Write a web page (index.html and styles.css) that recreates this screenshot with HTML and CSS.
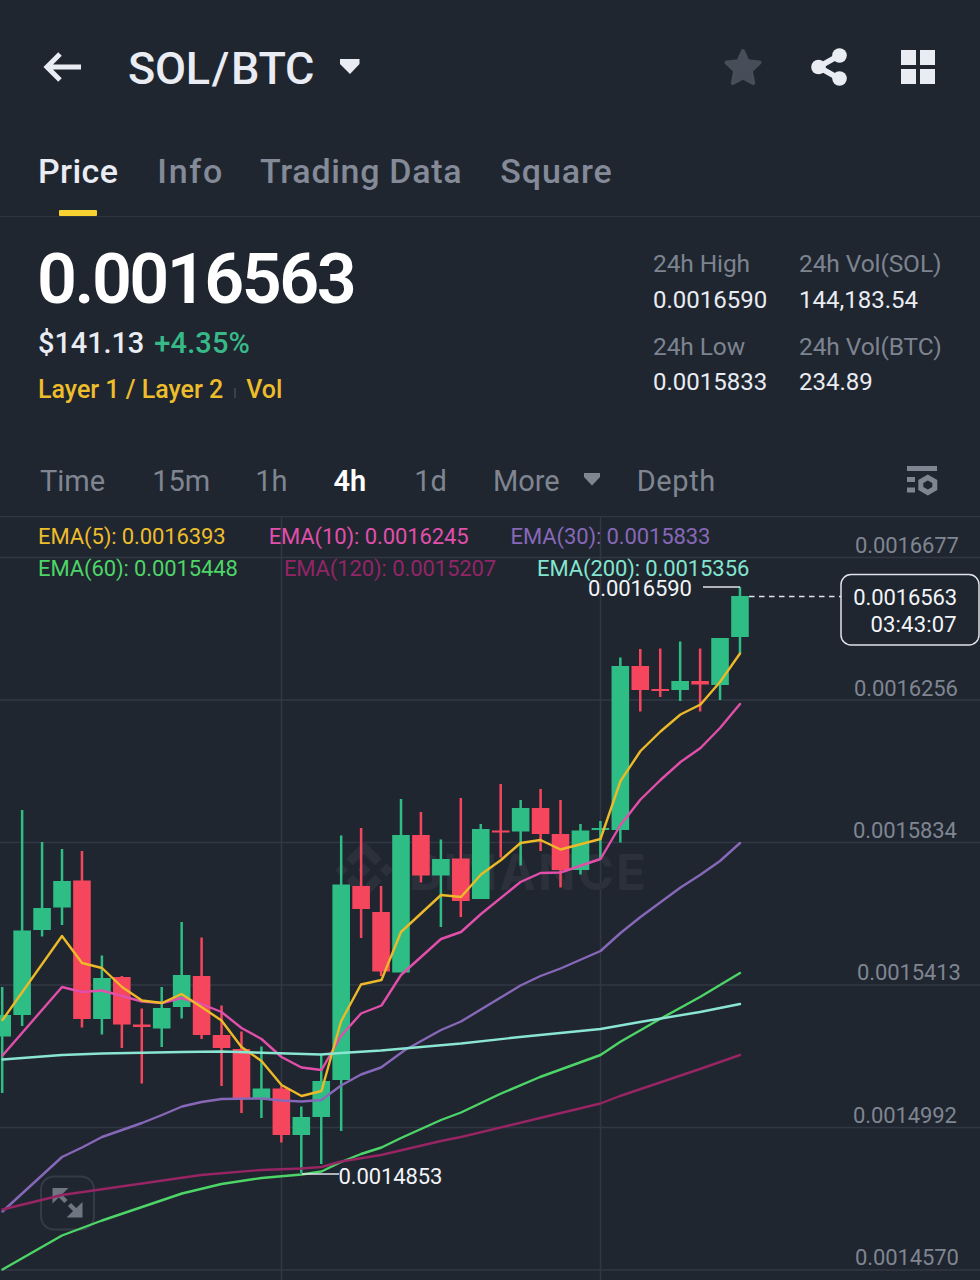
FILE: index.html
```html
<!DOCTYPE html>
<html lang="en">
<head>
<meta charset="utf-8">
<title>SOL/BTC</title>
<link rel="stylesheet" href="styles.css">
</head>
<body>
<div class="screen">
  <header class="header">
    <svg class="back" width="40" height="30" viewBox="0 0 40 30"><path d="M17 2 4 15l13 13M4 15h34" fill="none" stroke="currentColor" stroke-width="5"/></svg>
    <h1 class="pair">SOL<span class="slash">/</span>BTC</h1>
    <svg class="pair-caret" width="20" height="16" viewBox="0 0 20 16"><path d="M0 0h19.500v5L10 15 0 5z" fill="currentColor"/></svg>
    <div class="actions">
      <svg class="star" width="38" height="38" viewBox="0 0 38 38"><path d="m19 3 4.600 10.200L35.500 14.500l-8.700 8.200 2.400 12.300L19 29.500 8.800 35l2.400-12.300L2.500 14.500l11.900-1.300z" fill="currentColor" stroke="currentColor" stroke-width="4" stroke-linejoin="round"/></svg>
      <svg width="36" height="38" viewBox="0 0 36 38"><path d="M28 7.500 7.500 19 28 30.500" fill="none" stroke="currentColor" stroke-width="5.500"/><circle cx="28.500" cy="7.500" r="7.300" fill="currentColor"/><circle cx="7.500" cy="19" r="7.300" fill="currentColor"/><circle cx="28.500" cy="30.500" r="7.300" fill="currentColor"/></svg>
      <svg width="34" height="34" viewBox="0 0 34 34"><path d="M0 0h15v15H0zM19 0h15v15H19zM0 19h15v15H0zM19 19h15v15H19z" fill="currentColor"/></svg>
    </div>
  </header>

  <nav class="tabs">
    <span class="tab active">Price</span>
    <span class="tab tab-info">Info</span>
    <span class="tab tab-data">Trading Data</span>
    <span class="tab tab-square">Square</span>
  </nav>

  <section class="summary">
    <div class="quote">
      <div class="last">0.0016563</div>
      <div class="fiat">$141.13 <span class="up">+4.35%</span></div>
      <div class="tags"><span>Layer 1 / Layer 2</span><i class="sep"></i><span>Vol</span></div>
    </div>
    <dl class="stats">
      <div><dt>24h High</dt><dd>0.0016590</dd></div>
      <div><dt>24h Vol(SOL)</dt><dd>144,183.54</dd></div>
      <div><dt>24h Low</dt><dd>0.0015833</dd></div>
      <div><dt>24h Vol(BTC)</dt><dd>234.89</dd></div>
    </dl>
  </section>

  <nav class="intervals">
    <span>Time</span><span class="m15">15m</span><span>1h</span><span class="on">4h</span><span class="d1">1d</span>
    <span class="more">More<svg width="16" height="13" viewBox="0 0 16 13"><path d="M0 0h16v4l-8 8.500L0 4z" fill="currentColor"/></svg></span>
    <span class="depth">Depth</span>
    <svg class="settings" width="31" height="30" viewBox="0 0 31 30"><path d="M0 0h30v5H0zM0 11h8v5H0zM0 21.500h8v5H0z" fill="currentColor"/><path d="m20.800 11.500 7 4v7l-7 4-7-4v-7z" fill="none" stroke="currentColor" stroke-width="5"/></svg>
  </nav>

  <section class="chart">
    <svg class="plot" width="980" height="764" viewBox="0 516 980 764">
      <g class="grid">
        <path d="M0 516.500H980M0 557.500H980M0 700H980M0 842.500H980M0 985H980M0 1127.500H980M0 1270H980M281.500 516V1280M600.500 516V1280"/>
      </g>
      <g class="watermark">
        <path transform="translate(335 841) scale(2.420)" d="M16.624 13.920l2.717 2.715-7.353 7.353-7.353-7.352 2.717-2.716 4.636 4.659zM21.261 9.284 24 12l-2.715 2.716L18.568 12zM11.988 9.285l2.717 2.691-2.717 2.717L9.272 12zM2.716 9.284 5.409 12l-2.692 2.692L0 12zM11.988.012l7.353 7.329-2.717 2.715-4.636-4.635-4.635 4.659-2.718-2.715z"/>
        <text x="409" y="890" textLength="237">BINANCE</text>
      </g>
      <g class="expand">
        <rect x="41" y="1176.500" width="53" height="53" rx="13"/>
        <path class="head" d="M52.500 1188h16l-16 15.500zM82.500 1217.500h-16l16-15.500z"/>
        <path class="stem" d="M58 1193.500l8 8M69.500 1204.500l8 8"/>
      </g>
      <g id="candles"></g>
      <g class="averages">
        <polyline class="ema30" points="2.500,1211.500 62,1157 82,1147.500 102,1137 142,1123 162,1115 182,1106.500 201.500,1102 221.500,1099 261.500,1098.500 281.500,1100.500 301.500,1101.500 321.500,1100 341,1085.500 361,1074.500 381,1067.500 405,1050 441,1030 461,1021.500 520.500,985.500 540.500,976 560.500,968.500 600.500,951 620.500,933 640.500,917 680.500,887.500 700,875 720,861 740,843"/>
        <polyline class="ema60" points="2.500,1269.500 62,1235.500 102,1220.500 142,1207 182,1193.500 221.500,1184 261.500,1178 301.500,1174.500 321.500,1171.500 341,1162 361,1154 381.500,1147.500 401,1138 441,1120 461,1112.500 500,1094 540,1077 600.500,1055 620,1042 660,1019 700,997 740,973"/>
        <polyline class="ema120" points="2.500,1209.500 62,1195 142,1183.500 201,1175 261,1170 301,1168.500 321.500,1167 341,1161.500 381,1155 441,1141 461,1137 540,1118 600.500,1103.500 620,1096 700,1069 740,1055"/>
        <polyline class="ema10" points="2.500,1055.500 62,987 82,992 102,990.500 122,996 142,1001.500 162,1003 181.500,998 201.500,1004 221.500,1012 241.500,1028 261.500,1039 281.500,1057 301.500,1067.500 321.500,1070 341,1036 361,1013.500 381.500,1005.500 401,975 441,939 461,932 481,914 520.500,882 540.500,873 560.500,872.500 600.500,859 620.500,825 640.500,799.500 660.500,780 680.500,762 700.500,748 720,728 740,704"/>
        <polyline class="ema5" points="2.500,1020 62,936 82,963 102,968 122,987 142,1000.500 162,1003 181.500,994 201.500,1007 221.500,1020.500 241.500,1047 261.500,1061 281.500,1085 301.500,1096 321.500,1091 341,1021.500 361,984.500 381.500,980 401,932 441,895 461,897 481,874.500 501,860 520.500,843 540.500,840 560.500,849.500 600.500,839 620.500,781 640.500,751 660.500,731.500 680.500,714.500 700.500,704.500 720,682 740,653.500"/>
        <polyline class="ema200" points="2.500,1059.500 62,1055 102,1053.500 182,1052 221,1051.500 321,1054.500 341,1053 381,1050.500 461,1043.500 520,1037 600.500,1029 640,1022 700,1012 740,1004"/>
      </g>
      <g class="marks">
        <path d="M703 587H740M302 1174H339"/>
        <path d="M749 596.500H841" stroke-dasharray="5.500 4.500"/>
        <text x="588" y="596">0.0016590</text>
        <text x="338.500" y="1184">0.0014853</text>
      </g>
      <g class="axis">
        <text x="855" y="553">0.0016677</text>
        <text x="854" y="695.500">0.0016256</text>
        <text x="853" y="837.500">0.0015834</text>
        <text x="857" y="980">0.0015413</text>
        <text x="853" y="1123">0.0014992</text>
        <text x="855" y="1265">0.0014570</text>
      </g>
      <g class="price-tag">
        <rect x="841" y="574.500" width="138" height="70.500" rx="10"/>
        <text x="957" y="604.500">0.0016563</text>
        <text x="956.500" y="632" textLength="86">03:43:07</text>
      </g>
    </svg>
    <div class="legend">
      <div class="legend-row"><span class="c5">EMA(5): 0.0016393</span><span class="c10">EMA(10): 0.0016245</span><span class="c30">EMA(30): 0.0015833</span></div>
      <div class="legend-row second"><span class="c60">EMA(60): 0.0015448</span><span class="c120">EMA(120): 0.0015207</span><span class="c200">EMA(200): 0.0015356</span></div>
    </div>
  </section>
</div>
<script src="chart.js"></script>
</body>
</html>
```
FILE: styles.css
```css
* { box-sizing: border-box; }
body { margin: 0; background: #1f2630; color: #eaecf3; font-family: Roboto, "Liberation Sans", sans-serif; }
.screen { width: 980px; height: 1280px; overflow: hidden; }
svg { display: block; flex: none; }

.header { display: flex; align-items: center; height: 135px; padding: 0 45px 0 43px; }
.back { margin-top: -2px; }
.pair { margin: 2px 0 0 45px; font-size: 45px; line-height: 60px; font-weight: 500; letter-spacing: -0.3px; }
.slash { margin: 0 2px; }
.pair-caret { margin: -2px 0 0 26px; }
.actions { display: flex; align-items: center; margin: -1px 0 0 auto; }
.actions svg + svg { margin-left: 49px; }
.actions svg:last-child { margin-left: 54px; }
.star { color: #474d59; }

.tabs { display: flex; gap: 38px; height: 82px; padding-left: 38px; border-bottom: 1px solid #303640; font-size: 34px; line-height: 72px; font-weight: 500; letter-spacing: 0.4px; color: #848a97; }
.tab.active { display: flex; flex-direction: column; align-items: center; color: #eaecf3; }
.tab.active::after { content: ""; width: 38px; height: 7px; margin-top: 3px; border-radius: 1px; background: #f8d230; }
.tab-info { margin-left: 1px; letter-spacing: 1.7px; }
.tab-data { margin-left: -2px; letter-spacing: 0.7px; }
.tab-square { letter-spacing: 0.9px; }

.summary { display: flex; justify-content: space-between; height: 228px; padding: 30px 38px 0 38px; }
.last { margin-left: -1px; color: #fff; font-size: 70px; line-height: 64px; font-weight: 600; letter-spacing: -2.5px; }
.fiat { margin-top: 15px; font-size: 29px; line-height: 34px; font-weight: 500; letter-spacing: -0.1px; word-spacing: 3px; }
.up { color: #37b988; letter-spacing: 0.1px; }
.tags { display: flex; align-items: center; margin-top: 15px; color: #edbd2c; font-size: 25px; line-height: 30px; font-weight: 500; }
.sep { width: 2px; height: 10px; margin: 5px 10px 0 11px; background: #3a404b; }
.stats { display: grid; grid-template-columns: 146px auto; row-gap: 17px; align-content: start; width: 290px; margin: 2px -1px 0 0; }
.stats dt { color: #7d838f; font-size: 24.5px; line-height: 30px; letter-spacing: -0.1px; white-space: nowrap; }
.stats dd { margin: 5.5px 0 0; font-size: 24px; line-height: 30px; }

.intervals { display: flex; align-items: center; gap: 46px; height: 71px; padding: 0 42px 0 40px; color: #7f8591; font-size: 29px; line-height: 40px; }
.intervals .m15 { margin: 0 -1px 0 1px; }
.intervals .on { color: #fff; font-weight: 600; }
.intervals .d1 { margin-left: 2px; }
.more { display: flex; align-items: center; gap: 24px; }
.more svg { margin-top: -3px; }
.depth { margin-left: -9px; letter-spacing: 0.6px; }
.settings { margin-left: auto; }

.chart { position: relative; height: 764px; }
.legend { position: absolute; top: 5px; left: 38px; font-size: 22px; line-height: 32px; letter-spacing: -0.1px; }
.legend-row { display: flex; gap: 42px; }
.c10 { margin-left: 1px; }
.c5 { color: #edbd2c; }
.c10 { color: #e14fab; }
.c30 { color: #8768b8; }
.c60 { color: #4ed567; }
.c120 { color: #922567; margin-left: 4px; }
.c200 { color: #83e5cf; margin-left: -1px; }

.grid path { fill: none; stroke: #323843; stroke-width: 1.5; }
.watermark { fill: #2b303a; font-size: 49px; font-weight: 700; font-family: Inter, sans-serif; }
.expand rect { fill: #1f2630; stroke: #353b46; stroke-width: 2; }
.expand .head { fill: #707681; }
.expand .stem { stroke: #707681; stroke-width: 4.5; }
.bull { fill: #2ebd85; }
.bear { fill: #f6465d; }
.averages polyline { fill: none; stroke-width: 2.4; stroke-linejoin: round; stroke-linecap: round; }
.averages .ema5 { stroke: #ecb928; }
.averages .ema10 { stroke: #e14fab; }
.averages .ema30 { stroke: #8768b8; }
.averages .ema60 { stroke: #4ed567; }
.averages .ema120 { stroke: #972463; }
.averages .ema200 { stroke: #8ae6d3; }
.marks path { fill: none; stroke: #dfe2e8; stroke-width: 1.5; }
.marks text, .axis text, .price-tag text { font-size: 22px; letter-spacing: -0.1px; }
.marks text { fill: #f2f4f8; }
.axis text { fill: #7f8591; }
.price-tag rect { fill: #1f2630; stroke: #dfe2e8; stroke-width: 1.5; }
.price-tag text { fill: #f2f4f8; text-anchor: end; }
```
FILE: chart.js
```js
// Each candle: [direction, wick top, body top, body bottom, wick bottom]
const candles = [
  ["bull", 987, 1015, 1036.5, 1093], ["bull", 810, 930.5, 1015, 1026],
  ["bull", 842, 908, 930, 936.5], ["bull", 849, 881, 907.5, 925],
  ["bear", 851, 880.5, 1019, 1027.5], ["bull", 955.5, 978, 1019, 1034.5],
  ["bear", 976, 977, 1024.5, 1048], ["bear", 1008.5, 1024.5, 1027, 1083.5],
  ["bull", 987, 1008, 1028.5, 1047], ["bull", 922, 975, 1007, 1018.5],
  ["bear", 937.5, 976, 1035, 1039], ["bear", 1005.5, 1035, 1048, 1086],
  ["bear", 1031.5, 1049, 1098, 1113], ["bull", 1046.5, 1088.5, 1098, 1118],
  ["bear", 1086, 1088.5, 1135, 1142.5], ["bull", 1106.5, 1117, 1135, 1173],
  ["bull", 1054.5, 1081, 1117, 1164], ["bull", 835.5, 884.5, 1080, 1131],
  ["bear", 828, 886, 909, 938], ["bear", 886, 912, 971.5, 976],
  ["bull", 799, 835, 972.5, 972.5], ["bear", 812, 835, 875.5, 882.5],
  ["bull", 839.5, 859, 875.5, 927], ["bear", 798, 858.5, 901, 917],
  ["bull", 824, 829, 899, 899], ["bear", 784, 830.5, 832.5, 857.5],
  ["bull", 800, 808, 831.5, 865.5], ["bear", 789, 808, 834, 851],
  ["bear", 800, 834, 870, 887.5], ["bull", 824, 830.5, 870, 874.5],
  ["bull", 821, 828, 830, 858], ["bull", 657.5, 666, 830, 842.5],
  ["bear", 649, 666, 690, 711.5], ["bear", 648.5, 689, 691, 697],
  ["bull", 641.5, 681, 690, 701], ["bear", 648.5, 681, 684.5, 711.5],
  ["bull", 638, 638, 685, 700], ["bull", 587, 596, 637, 653]
];
const layer = document.getElementById("candles");
candles.forEach(([kind, high, top, bottom, low], i) => {
  const x = 2.2 + i * 19.94;
  const shape = document.createElementNS("http://www.w3.org/2000/svg", "path");
  shape.setAttribute("class", kind);
  shape.setAttribute("d",
    `M${x - 1.25} ${high}h2.5V${low}h-2.5zM${x - 8.8} ${top}h17.6V${bottom}h-17.6z`);
  layer.appendChild(shape);
});
```
